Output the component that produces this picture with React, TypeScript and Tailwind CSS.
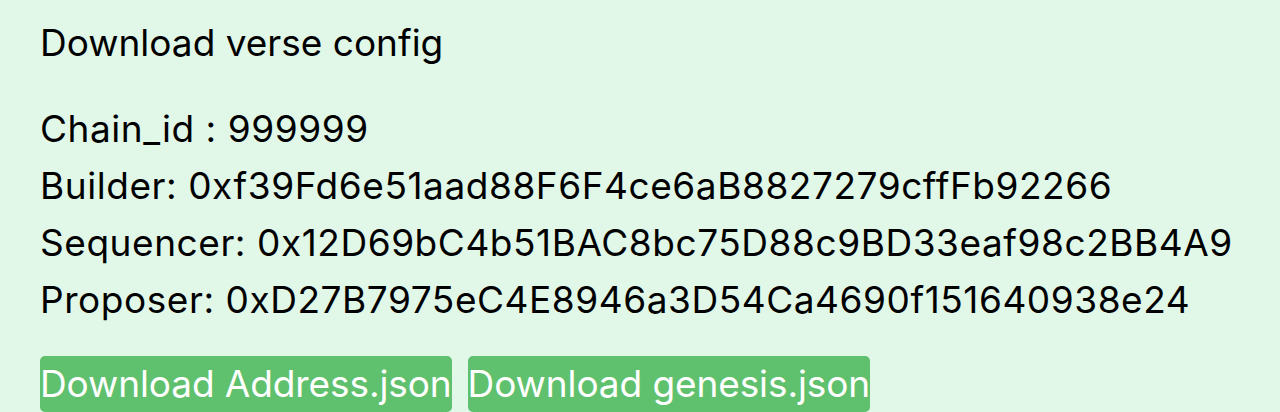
import React from "react";

export default function App() {
  const lines = [
    "Chain_id : 999999",
    "Builder: 0xf39Fd6e51aad88F6F4ce6aB8827279cffFb92266",
    "Sequencer: 0x12D69bC4b51BAC8bc75D88c9BD33eaf98c2BB4A9",
    "Proposer: 0xD27B7975eC4E8946a3D54Ca4690f151640938e24",
  ];
  return (
    <div className="min-h-[412px] w-full bg-[#e1f8e9] pl-[40px] pt-[14px] text-black" style={{ fontFamily: "Inter, 'Noto Sans', sans-serif" }}>
      <div className="text-[37px] leading-[57px]">Download verse config</div>
      <div className="mt-[29px] flex flex-col">
        {lines.map((l) => (
          <div key={l} className="text-[37px] leading-[57px] tracking-[0.55px]">{l}</div>
        ))}
      </div>
      <div className="mt-[28px] flex gap-[16px]">
        <button className="h-[56px] rounded-[5px] bg-[#5fc16d] px-0 text-[37px] leading-[56px] tracking-[-0.1px] text-white">Download Address.json</button>
        <button className="h-[56px] rounded-[5px] bg-[#5fc16d] px-0 text-[37px] leading-[56px] tracking-[-0.1px] text-white">Download genesis.json</button>
      </div>
    </div>
  );
}
